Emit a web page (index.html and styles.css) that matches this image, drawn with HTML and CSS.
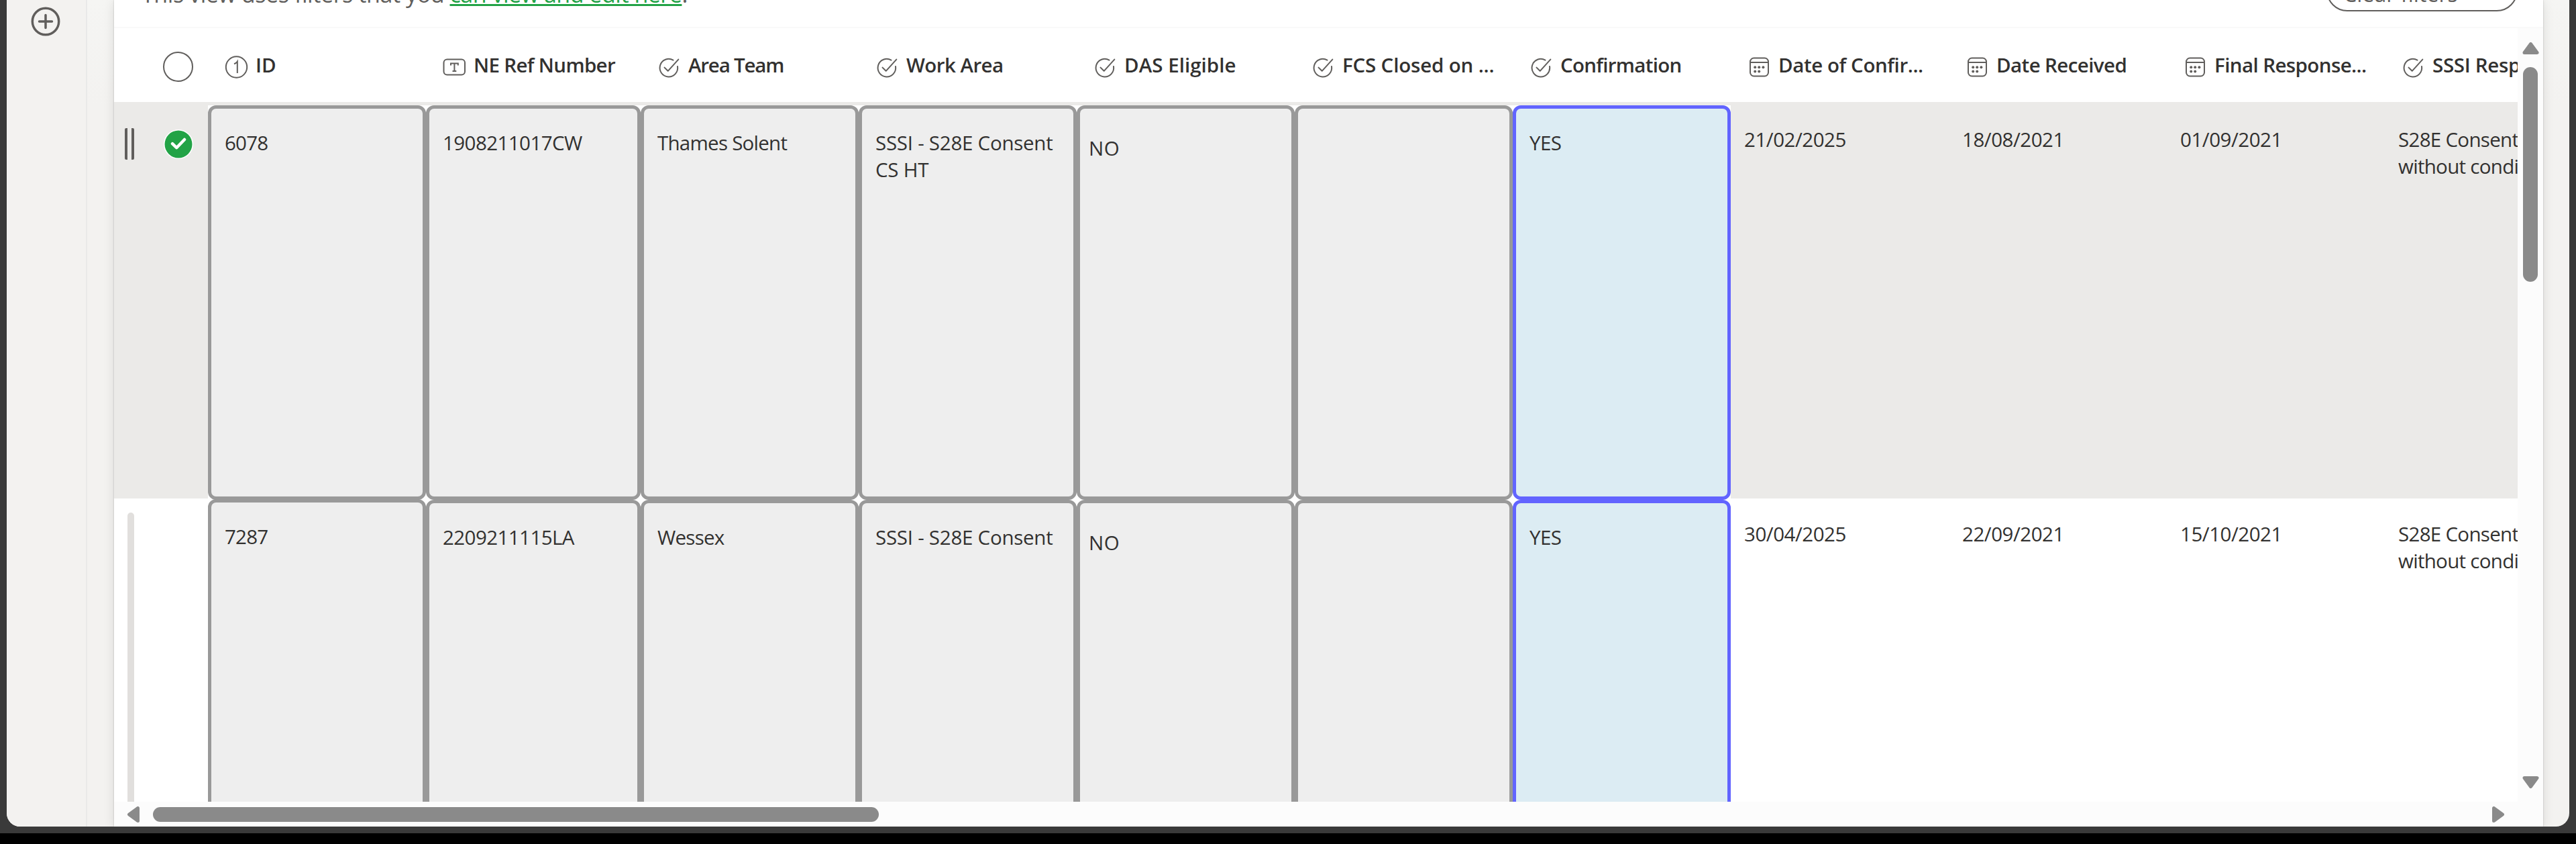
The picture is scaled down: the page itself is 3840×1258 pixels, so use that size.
FILE: index.html
```
<!DOCTYPE html>
<html lang="en">
<head>
<meta charset="utf-8">
<title>Consents list</title>
<link rel="stylesheet" href="styles.css">
</head>
<body>
<svg class="defs" width="0" height="0" aria-hidden="true">
  <symbol id="i-choice" viewBox="0 0 36 36"><path d="M24.5 7.6A13.3 13.3 0 1 0 31 17M11.5 18.6l5.2 5.2L32.3 6.6" fill="none" stroke="currentColor" stroke-width="2" stroke-linecap="round" stroke-linejoin="round"/></symbol>
  <symbol id="i-date" viewBox="0 0 36 36"><g fill="none" stroke="currentColor" stroke-width="2"><rect x="5" y="4.5" width="27" height="27" rx="5.5"/><path d="M5 11h27"/></g><g fill="currentColor"><circle cx="12.2" cy="18.3" r="2"/><circle cx="18.2" cy="18.3" r="2"/><circle cx="24.4" cy="18.3" r="2"/><circle cx="12.2" cy="24.6" r="2"/><circle cx="18.2" cy="24.6" r="2"/></g></symbol>
  <symbol id="i-number" viewBox="0 0 36 36"><circle cx="18.5" cy="18" r="15.7" fill="none" stroke="currentColor" stroke-width="2"/><path d="M15 13.2c2.2-.7 3.8-1.8 4.8-3.4V27" fill="none" stroke="currentColor" stroke-width="2"/></symbol>
  <symbol id="i-text" viewBox="0 0 36 36"><rect x="2.5" y="6.5" width="31.5" height="23" rx="5" fill="none" stroke="currentColor" stroke-width="2"/><path d="M13 15.500v-3h10.800v3M18.400 12.500v11.500M15.500 24h5.800" fill="none" stroke="currentColor" stroke-width="2"/></symbol>
</svg>
<div class="window">
  <nav class="rail">
    <svg class="add" viewBox="0 0 44 44"><circle cx="22" cy="22" r="19.700" /><path d="M22 12.500v19M12.500 22h19"/></svg>
  </nav>
  <main class="panel">
    <div class="notice">
      <p class="notice-text"><span class="lead">This view uses filters that you </span><a class="link">can view and edit here</a>.</p>
      <div class="clear">Clear filters</div>
    </div>
    <div class="list">
      <div class="grid">
        <div class="head">
          <div class="tools"><span class="circle"></span></div>
          <div class="th w1"><svg><use href="#i-number"/></svg><span>ID</span></div>
          <div class="th w2"><svg><use href="#i-text"/></svg><span style="letter-spacing:-.65px">NE Ref Number</span></div>
          <div class="th"><svg><use href="#i-choice"/></svg><span style="letter-spacing:-1.2px">Area Team</span></div>
          <div class="th"><svg><use href="#i-choice"/></svg><span style="letter-spacing:-.55px">Work Area</span></div>
          <div class="th"><svg><use href="#i-choice"/></svg><span style="letter-spacing:.04px">DAS Eligible</span></div>
          <div class="th"><svg><use href="#i-choice"/></svg><span style="letter-spacing:-.17px">FCS Closed on ...</span></div>
          <div class="th"><svg><use href="#i-choice"/></svg><span style="letter-spacing:-.7px">Confirmation</span></div>
          <div class="th"><svg><use href="#i-date"/></svg><span style="letter-spacing:-.41px">Date of Confir...</span></div>
          <div class="th"><svg><use href="#i-date"/></svg><span style="letter-spacing:-.59px">Date Received</span></div>
          <div class="th"><svg><use href="#i-date"/></svg><span style="letter-spacing:-.59px">Final Response...</span></div>
          <div class="th"><svg><use href="#i-choice"/></svg><span style="letter-spacing:-.3px">SSSI Response</span></div>
        </div>
        <div class="row selected">
          <div class="tools"><span class="handle"></span><svg class="tick" viewBox="0 0 44 44"><circle cx="22" cy="22" r="22" fill="#fff"/><circle cx="22" cy="22" r="20.500" fill="#22a346"/><path d="M13 21.200l6.200 6L31 15" fill="none" stroke="#fff" stroke-width="4.500" stroke-linecap="round" stroke-linejoin="round"/></svg></div>
          <div class="slot w1"><div class="box">6078</div></div>
          <div class="slot w2"><div class="box" style="letter-spacing:-.57px">1908211017CW</div></div>
          <div class="slot"><div class="box" style="letter-spacing:-.74px">Thames Solent</div></div>
          <div class="slot"><div class="box" style="letter-spacing:-.25px">SSSI - S28E Consent<br>CS HT</div></div>
          <div class="slot"><div class="box low">NO</div></div>
          <div class="slot"><div class="box"></div></div>
          <div class="slot"><div class="box active">YES</div></div>
          <div class="cell">21/02/2025</div>
          <div class="cell">18/08/2021</div>
          <div class="cell">01/09/2021</div>
          <div class="cell wide">S28E Consent<br>without conditions</div>
        </div>
        <div class="row">
          <div class="tools"><span class="marker"></span></div>
          <div class="slot w1"><div class="box raised">7287</div></div>
          <div class="slot w2"><div class="box" style="letter-spacing:-.57px">2209211115LA</div></div>
          <div class="slot"><div class="box" style="letter-spacing:-.74px">Wessex</div></div>
          <div class="slot"><div class="box" style="letter-spacing:-.25px">SSSI - S28E Consent</div></div>
          <div class="slot"><div class="box low">NO</div></div>
          <div class="slot"><div class="box"></div></div>
          <div class="slot"><div class="box active">YES</div></div>
          <div class="cell">30/04/2025</div>
          <div class="cell">22/09/2021</div>
          <div class="cell">15/10/2021</div>
          <div class="cell wide">S28E Consent<br>without conditions</div>
        </div>
      </div>
      <div class="vbar">
        <svg class="arrow" viewBox="0 0 24 18"><path d="M12 2.500L21.500 15.500h-19z"/></svg>
        <span class="vthumb"></span>
        <svg class="arrow end" viewBox="0 0 24 18"><path d="M12 15.500L21.500 2.500h-19z"/></svg>
      </div>
      <div class="hbar">
        <svg class="harrow" viewBox="0 0 18 24"><path d="M2.500 12L15.500 2.500v19z"/></svg>
        <span class="hthumb"></span>
        <svg class="harrow end" viewBox="0 0 18 24"><path d="M15.500 12L2.500 2.500v19z"/></svg>
      </div>
    </div>
  </main>
</div>
</body>
</html>
```
FILE: styles.css
```
* { box-sizing: border-box; }
body {
  margin: 0;
  height: 1258px;
  overflow: hidden;
  background: linear-gradient(#3a3a3a 1242px, #000 1242px);
  color: #323130;
  font: 29.5px/40px "Open Sans", "Noto Sans", sans-serif;
}
.defs { display: block; height: 0; }
.window {
  display: flex;
  width: 3820px;
  height: 1232px;
  margin-left: 10px;
  background: linear-gradient(#f5f5f3, #f3f2f0 160px);
  border-radius: 0 0 20px 20px;
  overflow: hidden;
}
.rail {
  width: 120px;
  padding: 10px 0 0 36px;
  background: #f3f2f0;
  border-right: 2px solid #e9e9e8;
}
.add { display: block; width: 44px; height: 44px; fill: none; stroke: #605e5c; stroke-width: 3.5; stroke-linecap: round; }
.panel {
  display: flex;
  flex-direction: column;
  width: 3621px;
  margin-left: 40px;
  background: #fff;
  box-shadow: 0 0 2px rgba(0,0,0,.22), 0 2px 16px rgba(0,0,0,.11);
}
.notice {
  display: flex;
  align-items: flex-end;
  justify-content: space-between;
  height: 42px;
  padding: 0 38px 23px 41px;
  border-bottom: 2px solid #f9f9f9;
  color: #605e5c;
}
.notice-text {
  margin: 0 0 3px;
  font-size: 34px;
  line-height: 46px;
  white-space: pre;
  letter-spacing: -.42px;
}
.link {
  color: #22a346;
  letter-spacing: -.48px;
  text-decoration: underline;
  text-decoration-thickness: 3px;
  text-underline-offset: 2px;
  text-decoration-skip-ink: none;
}
.clear {
  flex: none;
  width: 285px;
  height: 62px;
  padding: 14px 0 0 23px;
  border: 2px solid #605e5c;
  border-radius: 31px;
  font-size: 32px;
  letter-spacing: .07px;
}
.list {
  display: grid;
  flex: 1;
  grid-template: 1153px 37px / 3583px 38px;
  background: #fcfcfc;
}
.grid { overflow: hidden; background: #fff; }
.head, .row { display: flex; width: 3710px; }
.head { height: 110px; align-items: center; padding-top: 5px; font-weight: 600; }
.tools { display: flex; flex: none; width: 140px; }
.head .tools { padding-left: 73px; }
.circle { width: 45px; height: 45px; border: 2px solid #605e5c; border-radius: 50%; }
.th { display: flex; flex: none; align-items: center; width: 325px; padding-left: 24px; gap: 11px; white-space: nowrap; }
.th svg { flex: none; width: 36px; height: 36px; color: #605e5c; }
.th span { margin-top: -5px; }
.w2 { width: 320px !important; }
.row { height: 591px; padding-top: 2px; }
.row.selected { padding-top: 5px; background: #ebeae8; }
.row .tools { height: 586px; }
.selected .tools { align-items: flex-start; padding: 34px 0 0 16px; }
.handle { width: 14px; height: 47px; margin-right: 43.5px; border: solid #605e5c; border-width: 0 4.5px; border-radius: 2px; }
.tick { width: 44px; height: 44px; margin-top: 2px; }
.marker { width: 10px; height: 570px; margin: 19px 0 0 20px; background: #e1dfdd; border-radius: 5px; }
.slot { flex: none; width: 325px; height: 588px; background: #fff; }
.box {
  height: 588px;
  padding: 30.5px 0 0 20px;
  border: 5px solid #999;
  border-radius: 12px;
  background: #eee;
  white-space: nowrap;
  letter-spacing: -.8px;
}
.box.low { padding: 39px 0 0 13px; letter-spacing: .5px; }
.box.raised { height: 589px; margin-top: -1px; }
.box.active { border-color: #6264ff; background: #dcecf3; letter-spacing: -.6px; }
.cell { flex: none; width: 325px; padding: 30.5px 0 0 20px; white-space: nowrap; letter-spacing: -.47px; }
.cell.wide { letter-spacing: -.7px; }
.vbar { display: flex; flex-direction: column; align-items: center; padding: 21px 0 20px; }
.arrow { width: 25px; height: 18px; }
.harrow { width: 18px; height: 24px; }
.arrow path, .harrow path { fill: #8a8a8a; stroke: #8a8a8a; stroke-width: 5; stroke-linejoin: round; }
.vthumb { width: 22px; height: 320px; margin-top: 19px; background: #8a8a8a; border-radius: 11px; }
.end { margin-top: auto; }
.hbar { display: flex; align-items: center; padding: 0 20px; }
.hthumb { width: 1082px; height: 22px; margin-left: 20px; background: #8a8a8a; border-radius: 11px; }
.hbar .end { margin: 0 0 0 auto; }
```
